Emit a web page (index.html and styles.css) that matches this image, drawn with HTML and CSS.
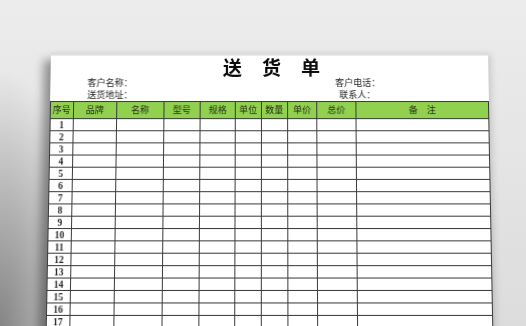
FILE: index.html
```html
<!DOCTYPE html>
<html lang="zh">
<head>
<meta charset="utf-8">
<title>送货单</title>
<link rel="stylesheet" href="styles.css">
</head>
<body>
<div class="stage">
  <div class="sheet">
    <div class="edge"></div>
    <h1 class="title"><span>送</span><span>货</span><span>单</span></h1>
    <div class="info">
      <div class="info-left">
        <div>客户名称：</div>
        <div>送货地址：</div>
      </div>
      <div class="info-right">
        <div>客户电话：</div>
        <div class="contact">联系人：</div>
      </div>
    </div>
    <table class="grid">
      <colgroup>
        <col class="c-no"><col class="c-brand"><col class="c-name"><col class="c-model"><col class="c-spec"><col class="c-unit"><col class="c-qty"><col class="c-price"><col class="c-total"><col>
      </colgroup>
      <thead>
        <tr><th>序号</th><th>品牌</th><th>名称</th><th>型号</th><th>规格</th><th>单位</th><th>数量</th><th>单价</th><th>总价</th><th>备　注</th></tr>
      </thead>
      <tbody>
        <tr><td>1</td><td></td><td></td><td></td><td></td><td></td><td></td><td></td><td></td><td></td></tr>
        <tr><td>2</td><td></td><td></td><td></td><td></td><td></td><td></td><td></td><td></td><td></td></tr>
        <tr><td>3</td><td></td><td></td><td></td><td></td><td></td><td></td><td></td><td></td><td></td></tr>
        <tr><td>4</td><td></td><td></td><td></td><td></td><td></td><td></td><td></td><td></td><td></td></tr>
        <tr><td>5</td><td></td><td></td><td></td><td></td><td></td><td></td><td></td><td></td><td></td></tr>
        <tr><td>6</td><td></td><td></td><td></td><td></td><td></td><td></td><td></td><td></td><td></td></tr>
        <tr><td>7</td><td></td><td></td><td></td><td></td><td></td><td></td><td></td><td></td><td></td></tr>
        <tr><td>8</td><td></td><td></td><td></td><td></td><td></td><td></td><td></td><td></td><td></td></tr>
        <tr><td>9</td><td></td><td></td><td></td><td></td><td></td><td></td><td></td><td></td><td></td></tr>
        <tr><td>10</td><td></td><td></td><td></td><td></td><td></td><td></td><td></td><td></td><td></td></tr>
        <tr><td>11</td><td></td><td></td><td></td><td></td><td></td><td></td><td></td><td></td><td></td></tr>
        <tr><td>12</td><td></td><td></td><td></td><td></td><td></td><td></td><td></td><td></td><td></td></tr>
        <tr><td>13</td><td></td><td></td><td></td><td></td><td></td><td></td><td></td><td></td><td></td></tr>
        <tr><td>14</td><td></td><td></td><td></td><td></td><td></td><td></td><td></td><td></td><td></td></tr>
        <tr><td>15</td><td></td><td></td><td></td><td></td><td></td><td></td><td></td><td></td><td></td></tr>
        <tr><td>16</td><td></td><td></td><td></td><td></td><td></td><td></td><td></td><td></td><td></td></tr>
        <tr><td>17</td><td></td><td></td><td></td><td></td><td></td><td></td><td></td><td></td><td></td></tr>
      </tbody>
    </table>
  </div>
</div>
</body>
</html>
```
FILE: styles.css
```css
html, body {
  margin: 0;
  padding: 0;
  width: 526px;
  height: 326px;
  overflow: hidden;
}
body {
  background:
    radial-gradient(ellipse 90px 260px at 0 330px, rgba(60,60,60,0.55), rgba(60,60,60,0) 100%),
    linear-gradient(180deg, #ececec 0%, #e6e6e6 40%, #dcdcdc 100%);
  font-family: "Noto Sans CJK SC", "Noto Sans", sans-serif;
  color: #1a1a1a;
}
.stage {
  padding: 52px 0 0 51px;
}
.sheet {
  width: 437px;
  background: #fff;
  box-shadow: -7px 8px 9px rgba(0,0,0,0.38), 3px 2px 6px rgba(0,0,0,0.12);
  transform-origin: 50% 0;
  transform: perspective(1000px) rotateX(5deg);
}
.edge {
  height: 3px;
  background: #dedede;
  border-bottom: 1px solid #ececec;
}
.title {
  margin: 0;
  height: 21px;
  display: flex;
  justify-content: center;
  gap: 20px;
  padding-left: 4px;
  font-size: 19px;
  line-height: 21px;
  font-weight: 700;
  color: #0a0a0a;
}
.info {
  display: flex;
  height: 24px;
  font-size: 9px;
  line-height: 12px;
  color: #222;
}
.info-left {
  width: 247px;
  padding-left: 37px;
}
.info-right .contact {
  padding-left: 4px;
}
.grid {
  width: 100%;
  table-layout: fixed;
  border-collapse: collapse;
}
.c-no { width: 22.5px; }
.c-brand { width: 43.5px; }
.c-name { width: 46.5px; }
.c-model { width: 36.5px; }
.c-spec { width: 35px; }
.c-unit { width: 25.5px; }
.c-qty { width: 26.5px; }
.c-price { width: 29px; }
.c-total { width: 39px; }
.grid th {
  background: #92d050;
  height: 16px;
  padding: 0;
  font-size: 9px;
  font-weight: 400;
  line-height: 16px;
  color: #1e2a12;
  border: 1px solid #3a3a3a;
  text-align: center;
}
.grid td {
  height: 11px;
  padding: 0;
  border: 1px solid #3c3c3c;
  font-family: "Liberation Serif", serif;
  font-weight: 700;
  font-size: 9.5px;
  line-height: 10px;
  text-align: center;
  color: #2a2a2a;
}
.grid td + td {
  border-left-color: #555;
}
```
